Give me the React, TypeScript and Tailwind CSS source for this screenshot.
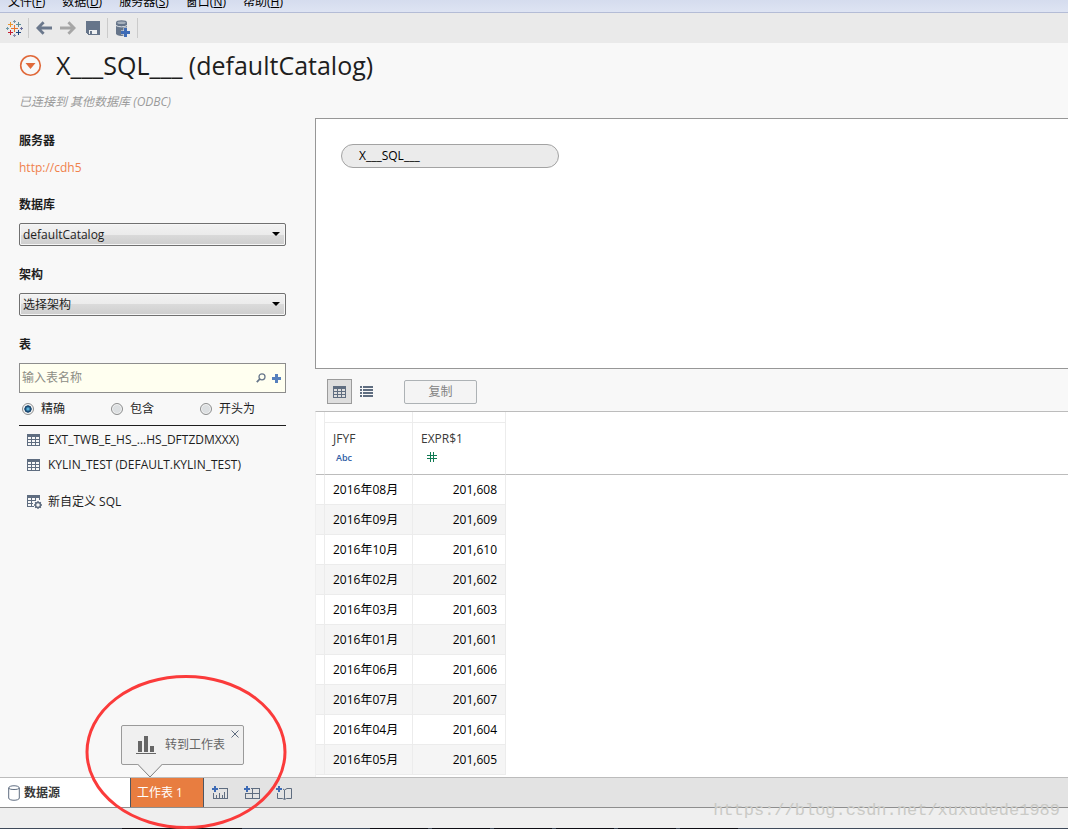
import { useState } from "react";

type MatchMode = "exact" | "contains" | "starts";

const menus = [
  { label: "文件", hotkey: "F" },
  { label: "数据", hotkey: "D" },
  { label: "服务器", hotkey: "S" },
  { label: "窗口", hotkey: "N" },
  { label: "帮助", hotkey: "H" },
];

const matchModes: { value: MatchMode; label: string }[] = [
  { value: "exact", label: "精确" },
  { value: "contains", label: "包含" },
  { value: "starts", label: "开头为" },
];

const tables = ["EXT_TWB_E_HS_...HS_DFTZDMXXX)", "KYLIN_TEST (DEFAULT.KYLIN_TEST)"];

const rows: [string, number][] = [
  ["2016年08月", 201608],
  ["2016年09月", 201609],
  ["2016年10月", 201610],
  ["2016年02月", 201602],
  ["2016年03月", 201603],
  ["2016年01月", 201601],
  ["2016年06月", 201606],
  ["2016年07月", 201607],
  ["2016年04月", 201604],
  ["2016年05月", 201605],
];

const LogoIcon = () => (
  <svg width="17" height="17" viewBox="0 0 17 17" fill="none" shapeRendering="crispEdges">
    <path d="M5 8.5h7M8.5 5v7" stroke="#e8762c" />
    <path d="M2 4.5h5M4.5 2v5" stroke="#e9962f" />
    <path d="M10 4.5h5M12.5 2v5" stroke="#5a8d97" />
    <path d="M2 12.5h5M4.5 10v5" stroke="#c72035" />
    <path d="M10 12.5h5M12.5 10v5" stroke="#1f457e" />
    <path d="M7 1.5h3M8.5 0v3" stroke="#7b98a8" />
    <path d="M7 15.5h3M8.5 14v3" stroke="#8489ad" />
    <path d="M0 8.5h3M1.5 7v3" stroke="#7099a6" />
    <path d="M14 8.5h3M15.5 7v3" stroke="#6b6f9c" />
  </svg>
);

const ArrowIcon = ({ flip }: { flip?: boolean }) => (
  <svg
    width="16"
    height="14"
    viewBox="0 0 16 14"
    fill="none"
    stroke="currentColor"
    strokeWidth="2.8"
    className={flip ? "rotate-180 text-[#a6a6a6]" : "text-[#6b788c]"}
  >
    <path d="M2 7h14M7.600 1.200L1.900 7l5.700 5.800" />
  </svg>
);

const SaveIcon = () => (
  <svg width="14" height="14" viewBox="0 0 14 14" shapeRendering="crispEdges">
    <path d="M0 0h14v14H2l-2-2z" fill="#66758a" />
    <path d="M3 9h8v4H3z" fill="#eef0f2" />
    <path d="M4 10h2v3H4z" fill="#66758a" />
  </svg>
);

const AddDataIcon = () => (
  <svg width="15" height="17" viewBox="0 0 15 17">
    <path d="M1 2.5C1 1.2 3 .3 6.500 .3S12 1.200 12 2.500v11C12 15 9.500 16 6.500 16S1 15 1 13.500z" fill="#66758a" />
    <ellipse cx="6.500" cy="2.700" rx="4.300" ry="1.300" fill="#a6b0bc" />
    <path d="M1 5.500c2 1.800 9 1.800 11 0" fill="none" stroke="#dfe3e7" />
    <path d="M8.500 7.500h4v3H15v4h-2.500V17h-4v-2.500H6v-4h2.500z" fill="#eaeaea" />
    <path d="M9 8h3v3h3v3h-3v3H9v-3H6v-3h3z" fill="#3e6bb5" />
  </svg>
);

const TableIcon = () => (
  <svg width="13" height="12" viewBox="0 0 13 12" fill="none" stroke="#5f6d80" shapeRendering="crispEdges">
    <path d="M0 0h13v3H0z" fill="#5f6d80" stroke="none" />
    <path d="M.5 .5v11h12V.5M4.500 2v9M8.500 2v9M0 5.500h13M0 8.500h13" />
  </svg>
);

const CustomSqlIcon = () => (
  <svg width="15" height="14" viewBox="0 0 15 14" fill="none">
    <g stroke="#5f6d80" shapeRendering="crispEdges">
      <path d="M0 0h13v3H0z" fill="#5f6d80" stroke="none" />
      <path d="M.5 .5v11H7M12.500 0v5M4.500 2v9M8.500 2v4M0 5.500h9M0 8.500h6" />
    </g>
    <circle cx="11" cy="10" r="2.500" stroke="#5f6d80" strokeWidth="1.500" />
    <path
      d="M11 6v1.500M11 12.500V14M7 10h1.500M13.500 10H15M8.200 7.200l1 1M12.800 11.800l1 1M8.200 12.800l1-1M12.800 8.200l1-1"
      stroke="#5f6d80"
      strokeWidth="1.300"
    />
  </svg>
);

const ListIcon = () => (
  <svg width="13" height="11" viewBox="0 0 13 11" fill="#5f6d80" shapeRendering="crispEdges">
    <path d="M0 0h2v2H0zM3 0h10v2H3zM0 3h2v2H0zM3 3h10v2H3zM0 6h2v2H0zM3 6h10v2H3zM0 9h2v2H0zM3 9h10v2H3z" />
  </svg>
);

const NewSheetIcon = () => (
  <svg width="16" height="14" viewBox="0 0 16 14" fill="none" shapeRendering="crispEdges">
    <path d="M7 2.500h8.500v10h-14V7" stroke="#5f6d80" />
    <path d="M4 9h1v3H4zM7 7h1v5H7zM10 9h1v3h-1zM12 6h1v6h-1z" fill="#5f6d80" />
    <path d="M2 0h2v2h2v2H4v2H2V4H0V2h2z" fill="#3e6bb5" />
  </svg>
);

const NewDashboardIcon = () => (
  <svg width="16" height="14" viewBox="0 0 16 14" fill="none" shapeRendering="crispEdges">
    <path d="M7 2.500h8.500v10h-14V7M8.500 2v10M1 7.500h14" stroke="#5f6d80" />
    <path d="M2 0h2v2h2v2H4v2H2V4H0V2h2z" fill="#3e6bb5" />
  </svg>
);

const NewStoryIcon = () => (
  <svg width="16" height="14" viewBox="0 0 16 14" fill="none">
    <path d="M1.500 7v5.500h5l2 1 2-1h5v-10h-4.500l-2.500 1.500L7 3M8.500 4v9" stroke="#5f6d80" />
    <path d="M2 0h2v2h2v2H4v2H2V4H0V2h2z" fill="#3e6bb5" />
  </svg>
);

const Divider = () => <span className="h-5 w-px bg-[#cbcbcb]" />;

const SelectField = ({ id, label, option }: { id: string; label: string; option: string }) => (
  <div className="mb-[19px]">
    <label htmlFor={id} className="block font-bold">
      {label}
    </label>
    <div className="relative mt-2">
      <select
        id={id}
        className="block h-[23px] w-full appearance-none rounded-[2px] border border-[#707070] bg-[linear-gradient(#f2f2f2,#ebebeb_50%,#dadada_50%,#cecece)] pl-[3px] text-[#1e1e1e] shadow-[inset_0_0_0_1px_#f6f6f6]"
      >
        <option>{option}</option>
      </select>
      <svg width="8" height="4" viewBox="0 0 8 4" className="pointer-events-none absolute top-[9px] right-[6px]">
        <path d="M0 0h8L4 4z" fill="#000" />
      </svg>
    </div>
  </div>
);

const Sidebar = () => {
  const [mode, setMode] = useState<MatchMode>("exact");

  return (
    <aside className="w-[315px] shrink-0 pt-[13px] pr-[29px] pl-[19px]">
      <h2 className="font-bold">服务器</h2>
      <a href="#server" className="mt-[7px] mb-[17px] block text-[#f0814c]">
        http://cdh5
      </a>

      <SelectField id="database" label="数据库" option="defaultCatalog" />
      <SelectField id="schema" label="架构" option="选择架构" />

      <label htmlFor="table-name" className="block font-bold">
        表
      </label>
      <div className="mt-2 flex h-[30px] items-center border border-[#8d8d8d] bg-[#fffff0] pr-1">
        <input
          id="table-name"
          type="text"
          placeholder="输入表名称"
          className="min-w-0 flex-1 bg-transparent pl-[2px] outline-none placeholder:text-[#8d8d85]"
        />
        <button type="button" aria-label="搜索">
          <svg width="10" height="10" viewBox="0 0 10 10" fill="none" stroke="#66758a">
            <circle cx="6" cy="3.800" r="3" strokeWidth="1.300" />
            <path d="M3.800 6L.8 9.200" strokeWidth="1.800" />
          </svg>
        </button>
        <button type="button" aria-label="添加" className="ml-[6px]">
          <svg width="9" height="9" viewBox="0 0 9 9" shapeRendering="crispEdges">
            <path d="M3 0h3v3h3v3H6v3H3V6H0V3h3z" fill="#5680bd" />
          </svg>
        </button>
      </div>

      <div className="mt-[6px] grid grid-cols-3 pb-[6px]">
        {matchModes.map((m) => (
          <label key={m.value} className="flex items-center gap-[7px] pl-[3px]">
            <input
              type="radio"
              name="match-mode"
              value={m.value}
              checked={mode === m.value}
              onChange={() => setMode(m.value)}
              className="size-3 appearance-none rounded-full border border-[#8e8f8f] bg-[#dcdfe1] shadow-[inset_0_0_0_1px_#f4f4f4] checked:bg-[radial-gradient(circle,#5fb8e0_8%,#17456e_38%,#17456e_48%,#f4f4f4_56%)]"
            />
            {m.label}
          </label>
        ))}
      </div>

      <ul className="border-t border-[#1e1e1e] pt-px">
        {tables.map((name) => (
          <li key={name} className="flex h-[25px] items-center gap-2 pl-2 whitespace-nowrap">
            <TableIcon />
            {name}
          </li>
        ))}
      </ul>
      <button type="button" className="mt-3 flex h-[25px] items-center gap-[6px] pl-2">
        <CustomSqlIcon />
        新自定义 SQL
      </button>
    </aside>
  );
};

const DataGrid = () => (
  <div className="flex-1 border-t border-l border-t-[#bcbcbc] border-l-[#efefef] bg-white">
    <table className="w-full table-fixed border-separate border-spacing-0">
      <colgroup>
        <col className="w-[9px]" />
        <col className="w-[88px]" />
        <col className="w-[93px]" />
        <col />
      </colgroup>
      <thead>
        <tr className="h-[11px]">
          <td className="border-r border-[#ececec]" />
          <td className="border-r border-b border-[#ececec]" />
          <td className="border-r border-b border-[#ececec]" />
          <td />
        </tr>
        <tr className="h-[52px] text-left align-top text-[#3a3a3a]">
          <td className="border-r border-b border-r-[#ececec] border-b-[#bcbcbc]" />
          <th className="border-r border-b border-r-[#ececec] border-b-[#bcbcbc] px-2 pt-[6px] font-normal">
            JFYF
            <span className="block pl-[3px] text-[9px] leading-[18px] font-semibold text-[#2f5da5]">Abc</span>
          </th>
          <th className="border-r border-b border-r-[#ececec] border-b-[#bcbcbc] px-2 pt-[6px] font-normal">
            EXPR$1
            <svg
              width="10"
              height="10"
              viewBox="0 0 10 10"
              stroke="#117a53"
              shapeRendering="crispEdges"
              className="mt-[3px] ml-[6px] block"
            >
              <path d="M0 3.500h10M0 6.500h10M3.500 0v10M6.500 0v10" />
            </svg>
          </th>
          <td className="border-b border-[#bcbcbc]" />
        </tr>
      </thead>
      <tbody className="text-black">
        {rows.map(([month, value]) => (
          <tr key={month} className="group h-[30px]">
            <td className="border-r border-b border-[#ececec] group-even:bg-[#f5f5f5]" />
            <td className="border-r border-b border-[#ececec] px-2 group-even:bg-[#f5f5f5]">{month}</td>
            <td className="border-r border-b border-[#ececec] px-2 text-right group-even:bg-[#f5f5f5]">
              {value.toLocaleString("en-US")}
            </td>
            <td />
          </tr>
        ))}
      </tbody>
    </table>
  </div>
);

const SheetTip = () => (
  <div className="absolute bottom-[13px] left-[-9px] z-10 flex h-10 w-[123px] items-center rounded-[2px] border border-[#9a9a9a] bg-[#f0f0f0] pl-[14px] text-[#666]">
    <svg width="20" height="18" viewBox="0 0 20 18" fill="#666" shapeRendering="crispEdges">
      <path d="M2 5h4v11H2zM8 0h4v16H8zM14 10h4v6h-4zM0 17h20v1H0z" />
    </svg>
    <button type="button" className="ml-[9px]">
      转到工作表
    </button>
    <button type="button" aria-label="关闭" className="absolute top-1 right-1">
      <svg width="8" height="8" viewBox="0 0 8 8" stroke="#5f6d80">
        <path d="M.5 .5l7 7M7.500 .5l-7 7" />
      </svg>
    </button>
    <svg width="26" height="14" viewBox="0 0 26 14" className="absolute top-full left-[15px] overflow-visible">
      <path d="M.5 -1h25v1.500L13 13.500.500 .5z" fill="#f0f0f0" />
      <path d="M.5 0l12.500 13L25.500 0" fill="none" stroke="#808080" />
    </svg>
  </div>
);

const SheetTabs = () => (
  <nav className="relative flex h-[31px] items-stretch border-t border-b border-t-[#bcbcbc] border-b-[#8e8e8e] bg-[#e3e3e3]">
    <button type="button" className="flex w-[130px] items-center gap-1 bg-white pl-2 font-bold text-[#3a3a3a]">
      <svg width="12" height="16" viewBox="0 0 12 16" fill="none" stroke="#5f6d80">
        <path d="M.7 3c0-3 10.600-3 10.600 0v10c0 3-10.600 3-10.600 0zM.7 3c0 2 10.600 2 10.600 0" />
      </svg>
      数据源
    </button>
    <div className="relative flex">
      <button type="button" className="w-[74px] border-r border-l border-[#4e5560] bg-[#e87d40] pl-[6px] text-left text-white">
        工作表 1
      </button>
      <div className="absolute top-0 left-0">
        <SheetTip />
      </div>
    </div>
    <div className="flex items-center gap-4 pl-2">
      <button type="button" aria-label="新建工作表">
        <NewSheetIcon />
      </button>
      <button type="button" aria-label="新建仪表板">
        <NewDashboardIcon />
      </button>
      <button type="button" aria-label="新建故事">
        <NewStoryIcon />
      </button>
    </div>
  </nav>
);

const StatusBar = () => (
  <footer className="bg-[#efefef] pt-5">
    <div className="flex h-px gap-1 bg-[#3f4a5a]">
      <span className="ml-[122px] w-[120px] bg-[#0d0d14]" />
      <span className="ml-[124px] w-[58px] bg-[#0d0d14]" />
      <span className="w-[58px] bg-[#0d0d14]" />
      <span className="w-[58px] bg-[#0d0d14]" />
      <span className="w-[58px] bg-[#0d0d14]" />
      <span className="w-[58px] bg-[#0d0d14]" />
      <span className="w-[58px] bg-[#0d0d14]" />
    </div>
  </footer>
);

export default function App() {
  return (
    <div className="relative flex min-h-screen flex-col overflow-hidden bg-[#f8f8f8] font-['Open_Sans','Noto_Sans_CJK_SC',sans-serif] text-[12px] leading-5 text-[#1e1e1e] [&_button_svg]:block [&_svg]:shrink-0">
      <nav className="flex h-[13px] items-end gap-[17px] overflow-hidden border-b border-[#b4bcd6] bg-linear-to-b from-[#d5dcee] to-[#dee4f3] pl-2 text-black">
        {menus.map((m) => (
          <button key={m.hotkey} type="button">
            {m.label}(<u>{m.hotkey}</u>)
          </button>
        ))}
      </nav>

      <div className="flex h-[30px] items-center gap-[7px] bg-[#eaeaea] pl-[6px]">
        <div className="flex items-center gap-[5px]">
          <button type="button" aria-label="起始页">
            <LogoIcon />
          </button>
          <Divider />
        </div>
        <button type="button" aria-label="后退">
          <ArrowIcon />
        </button>
        <button type="button" aria-label="前进" className="ml-px">
          <ArrowIcon flip />
        </button>
        <button type="button" aria-label="保存" className="ml-[3px]">
          <SaveIcon />
        </button>
        <Divider />
        <button type="button" aria-label="新建数据源">
          <AddDataIcon />
        </button>
        <Divider />
      </div>

      <header className="h-[75px] pl-[19px]">
        <div className="flex h-11 items-center gap-[14px]">
          <button type="button" aria-label="数据源菜单">
            <svg width="23" height="23" viewBox="0 0 23 23">
              <circle cx="11.500" cy="11.500" r="9.800" fill="none" stroke="#e0693a" strokeWidth="1.600" />
              <path d="M6.500 9h10l-5 6z" fill="#e0693a" />
            </svg>
          </button>
          <h1 className="text-[25px] whitespace-nowrap">X___SQL___ (defaultCatalog)</h1>
        </div>
        <p className="mt-[5px] text-[#9b9b9b] italic">已连接到 其他数据库 (ODBC)</p>
      </header>

      <div className="flex flex-1">
        <Sidebar />
        <main className="flex min-w-0 flex-1 flex-col">
          <section className="h-[251px] border-t border-b border-l border-[#979797] bg-white p-[25px]">
            <div className="flex h-6 w-[218px] items-center rounded-full border border-[#a3a3a3] bg-[#ebebeb] pl-[17px] text-black">
              X___SQL___
            </div>
          </section>
          <div className="flex h-[42px] items-center pt-[3px] pl-3">
            <button
              type="button"
              aria-label="预览数据源"
              className="flex size-[25px] items-center justify-center border border-[#9b9b9b] bg-[#dedede]"
            >
              <TableIcon />
            </button>
            <button type="button" aria-label="管理元数据" className="ml-2">
              <ListIcon />
            </button>
            <button
              type="button"
              className="ml-[31px] h-6 w-[73px] rounded-[2px] border border-[#adb2b5] bg-[#f4f4f4] text-[#838383]"
            >
              复制
            </button>
          </div>
          <DataGrid />
        </main>
      </div>

      <SheetTabs />
      <StatusBar />

      <svg width="202" height="154" viewBox="0 0 202 154" className="pointer-events-none absolute bottom-0 left-[85px] z-20">
        <ellipse cx="101" cy="77" rx="99" ry="75.500" fill="none" stroke="#fb3b3b" strokeWidth="3" />
      </svg>
      <p className="pointer-events-none absolute right-[8px] bottom-2 font-['Liberation_Mono',monospace] text-[17px] text-[#cacac6]">
        https://blog.csdn.net/xuxudede1989
      </p>
    </div>
  );
}
